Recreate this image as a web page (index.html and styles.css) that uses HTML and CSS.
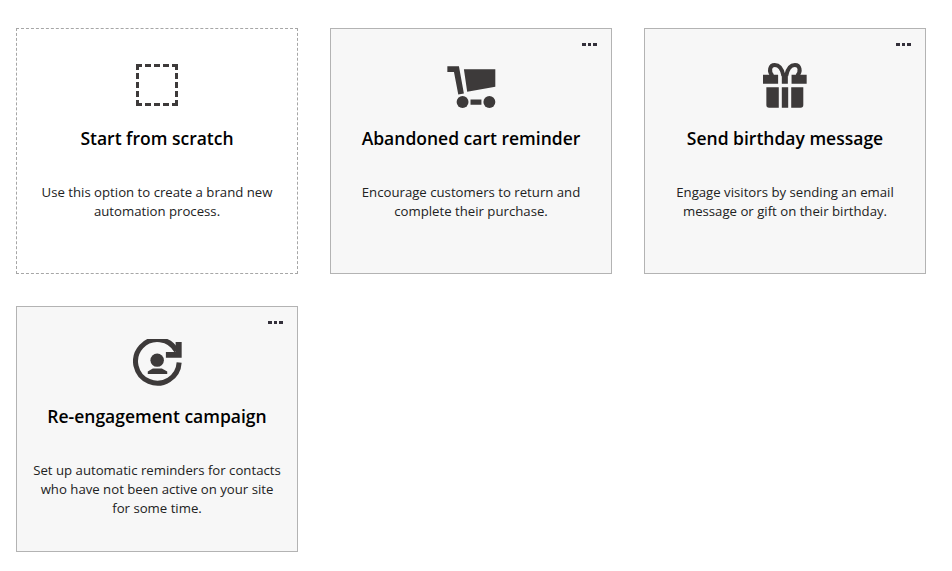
FILE: index.html
```html
<!DOCTYPE html>
<html lang="en">
<head>
<meta charset="utf-8">
<title>Automation templates</title>
<link rel="stylesheet" href="styles.css">
</head>
<body>
<main class="grid">
  <section class="card card-blank">
    <div class="icon-slot">
      <svg class="icon" width="42" height="42" viewBox="0 0 42 42"><path class="dash" d="M1.5 6V1.5H6M9 1.5H15M18 1.5H24M27 1.5H33M36 1.5H40.5V6M40.5 9V15M40.5 18V24M40.5 27V33M40.5 36V40.5H36M33 40.5H27M24 40.5H18M15 40.5H9M6 40.5H1.5V36M1.5 33V27M1.5 24V18M1.5 15V9"/></svg>
    </div>
    <h2 class="title">Start from scratch</h2>
    <p class="desc">Use this option to create a brand new automation process.</p>
  </section>
  <section class="card">
    <button class="more" aria-label="More"><span></span><span></span><span></span></button>
    <div class="icon-slot">
      <svg class="icon icon-cart" width="49" height="43" viewBox="50 110 146 130"><path class="fill" d="M50 111H85L100 193L83 196L70 128H50ZM100 120H195V173L110 188ZM120 211H153V227H120Z"/><circle class="fill" cx="96" cy="219" r="18"/><circle class="fill" cx="177" cy="219" r="18"/></svg>
    </div>
    <h2 class="title">Abandoned cart reminder</h2>
    <p class="desc">Encourage customers to return and complete their purchase.</p>
  </section>
  <section class="card">
    <button class="more" aria-label="More"><span></span><span></span><span></span></button>
    <div class="icon-slot">
      <svg class="icon" width="44" height="45" viewBox="40 98 131 134"><path class="fill" d="M40 133H85V160H40ZM96 133H114V160H96ZM125 133H170V160H125ZM50 170H87V231H58Q50 231 50 223ZM96 170H115V231H96ZM124 170H160V223Q160 231 152 231H124Z"/><path class="bow" d="M101 136C97 116 87 104 75 104C60 104 56 122 68 136M109 136C113 116 123 104 135 104C150 104 154 122 142 136"/></svg>
    </div>
    <h2 class="title">Send birthday message</h2>
    <p class="desc">Engage visitors by sending an email message or gift on their birthday.</p>
  </section>
  <section class="card">
    <button class="more" aria-label="More"><span></span><span></span><span></span></button>
    <div class="icon-slot">
      <svg class="icon" width="49" height="49" viewBox="38 86 146 146"><path class="ring" d="M168 122A65 65 0 1 0 175.500 156"/><path class="fill" d="M183 95V142H136V125H165V95Z"/><circle class="fill" cx="110" cy="149" r="20"/><path class="fill" d="M82 190V183L97 174H124L140 183V190Z"/></svg>
    </div>
    <h2 class="title">Re-engagement campaign</h2>
    <p class="desc">Set up automatic reminders for contacts who have not been active on your site for some time.</p>
  </section>
</main>
</body>
</html>
```
FILE: styles.css
```css
html, body { margin: 0; background: #fff; }
body { font-family: "Open Sans", "Noto Sans", sans-serif; color: #111; }
.grid { display: grid; grid-template-columns: repeat(3, 282px); grid-auto-rows: 246px; gap: 32px; padding: 28px 16px 0; }
.card { position: relative; box-sizing: border-box; background: #f7f7f7; border: 1px solid #b3b3b3; padding: 0 15px; text-align: center; display: flex; flex-direction: column; align-items: center; }
.card-blank { background: #fff; border: 1px dashed #a6a6a6; }
.icon-slot { height: 48px; margin-top: 32px; display: flex; align-items: center; justify-content: center; }
.icon { display: block; }
.icon-cart { align-self: flex-end; }
.fill { fill: #3d3a3a; }
.dash { fill: none; stroke: #3d3a3a; stroke-width: 3; }
.bow { fill: none; stroke: #3d3a3a; stroke-width: 12; }
.ring { fill: none; stroke: #3d3a3a; stroke-width: 15; }
.title { margin: 16px 0 0; font-size: 17.5px; line-height: 26px; font-weight: 600; color: #000; }
.desc { margin: 32px 0 0; font-size: 13.2px; line-height: 19px; color: #222; }
.more { position: absolute; top: 14px; right: 14.500px; display: flex; gap: 2px; padding: 0; border: 0; background: none; }
.more span { width: 3.5px; height: 3.300px; background: #33303a; }
```
